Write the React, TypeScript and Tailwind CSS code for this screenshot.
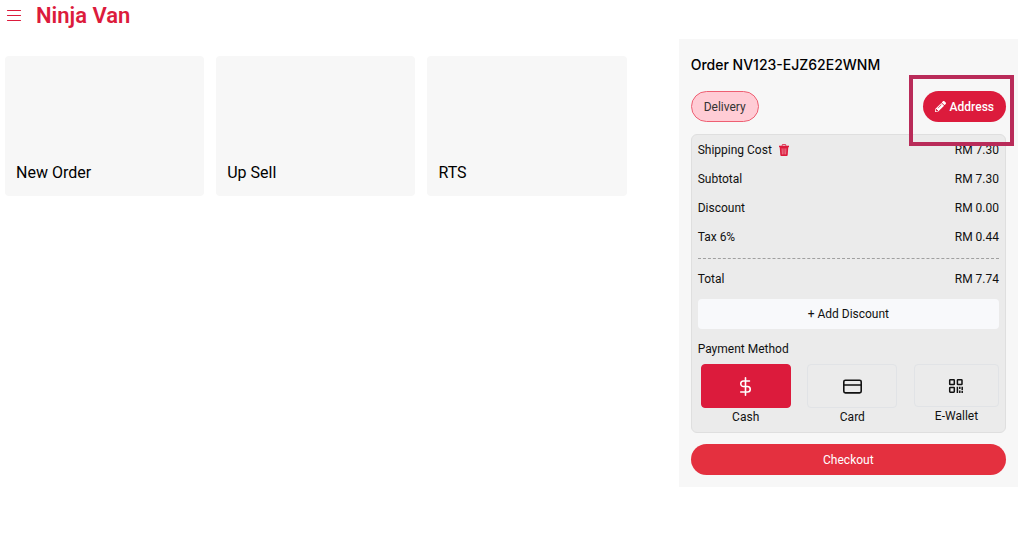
import { FaPencilAlt } from "react-icons/fa";
import { FiCreditCard, FiDollarSign } from "react-icons/fi";

const orderTypes = ["New Order", "Up Sell", "RTS"];

const charges = [
  { label: "Shipping Cost", amount: "RM 7.30", removable: true },
  { label: "Subtotal", amount: "RM 7.30" },
  { label: "Discount", amount: "RM 0.00" },
  { label: "Tax 6%", amount: "RM 0.44" },
];

const MenuIcon = () => (
  <svg className="size-4" viewBox="0 0 16 16" stroke="currentColor" strokeWidth="1.2" strokeLinecap="round" aria-hidden="true">
    <path d="M1.5 2.5h13M1.5 7.5h13M1.5 12.5h13" />
  </svg>
);

const TrashIcon = () => (
  <svg className="size-3" viewBox="0 0 12 12" fill="none" aria-hidden="true">
    <path d="M4.2 1.8V1a.6.6 0 0 1 .6-.6h2.4a.6.6 0 0 1 .6.6v.8" stroke="currentColor" strokeWidth="0.9" />
    <path d="M1 1.7h10v1.5H1z" fill="currentColor" />
    <path d="M1.7 3h8.6l-.6 8a1 1 0 0 1-1 .9H3.3a1 1 0 0 1-1-.9z" fill="currentColor" />
    <path d="M4.1 4.4l.3 6M6 4.4v6M7.9 4.4l-.3 6" stroke="#f0a3b0" strokeWidth="0.7" />
  </svg>
);

const QrIcon = () => (
  <svg
    className="size-4"
    viewBox="0 0 16 16"
    fill="none"
    stroke="currentColor"
    strokeWidth="1.5"
    aria-hidden="true"
  >
    <rect x="1.7" y="1.7" width="4.6" height="4.8" rx="0.6" />
    <rect x="9.4" y="1.7" width="4.6" height="4.8" rx="0.6" />
    <rect x="1.7" y="9.4" width="4.6" height="4.8" rx="0.6" />
    <path d="M9.4 8.8v6.2M11.8 8.8v2.2M11.8 12.4v2.6M14.2 8.8v3.4M14.2 13v2" />
  </svg>
);

const payments = [
  { id: "cash", label: "Cash", icon: <FiDollarSign size={19} />, width: "w-[90px]", height: "h-11" },
  { id: "card", label: "Card", icon: <FiCreditCard size={19} />, width: "w-[90px]", height: "h-11" },
  { id: "wallet", label: "E-Wallet", icon: <QrIcon />, width: "w-[85px]", height: "h-[43px]" },
];

const Header = () => {
  return (
    <header className="flex h-8 items-center gap-3.5 px-1.5">
      <button aria-label="Menu" className="text-[#dc1b3c]">
        <MenuIcon />
      </button>
      <h1 className="text-[22px] leading-8 font-semibold text-[#dc1b3c]">Ninja Van</h1>
    </header>
  );
};

const OrderPanel = () => {
  return (
    <aside className="w-1/3 bg-[#f7f7f7] p-3">
      <h2 className="pt-0.5 font-['Inter',sans-serif] text-sm leading-6 font-medium text-black">
        Order NV123-EJZ62E2WNM
      </h2>

      {/* Delivery and address buttons */}
      <div className="mt-3.5 flex items-center justify-between">
        <button className="h-[31px] rounded-full border border-[#ee5f72] bg-[#ffccd5] px-3 text-[#333]">
          Delivery
        </button>
        <div className="relative">
          <button className="flex h-[31px] items-center gap-1 rounded-full bg-[#dc1b3c] px-3 font-medium text-white">
            <FaPencilAlt size={11} />
            Address
          </button>
          <div className="pointer-events-none absolute -top-4 -right-2 -bottom-6 -left-3.5 border-4 border-[#b92b59]"></div>
        </div>
      </div>

      {/* Order summary */}
      <div className="mt-3 rounded-md border border-[#dfdfdf] bg-[#ebebeb] px-1.5 pb-1.5">
        <table className="w-full">
          <tbody>
            {charges.map((row) => (
              <tr key={row.label} className="h-[29px]">
                <th scope="row" className="text-left font-normal">
                  <span className="flex items-center gap-1.5">
                    {row.label}
                    {row.removable && (
                      <button aria-label="Remove shipping cost" className="text-[#dc1b3c]">
                        <TrashIcon />
                      </button>
                    )}
                  </span>
                </th>
                <td className="text-right">{row.amount}</td>
              </tr>
            ))}
          </tbody>
        </table>
        <div className="mt-[7px] flex items-center justify-between border-t border-dashed border-[#a0a0a0] py-3">
          <span>Total</span>
          <span>RM 7.74</span>
        </div>
        <button className="h-[30px] w-full rounded-sm bg-[#f8f9fb]">+ Add Discount</button>

        {/* Payment options */}
        <fieldset>
          <legend className="pt-3 pb-[7px]">Payment Method</legend>
          <div className="flex items-start justify-between pl-[3px]">
            {payments.map((item) => (
              <label key={item.id} className={`flex flex-col items-center ${item.width}`}>
                <input
                  type="radio"
                  name="payment"
                  defaultChecked={item.id === "cash"}
                  className="peer sr-only"
                />
                <span
                  className={`flex w-full items-center justify-center rounded-sm border border-[#e1e3e6] peer-checked:border-[#dc1b3c] peer-checked:bg-[#dc1b3c] peer-checked:text-white ${item.height}`}
                >
                  {item.icon}
                </span>
                <span className="leading-[18px]">{item.label}</span>
              </label>
            ))}
          </div>
        </fieldset>
      </div>

      <button className="mt-[11px] h-[31px] w-full rounded-full bg-[#e4303f] text-white">Checkout</button>
    </aside>
  );
};

const App = () => {
  return (
    <div className="min-h-screen bg-white font-['Roboto',sans-serif] text-xs text-[#111]">
      <Header />
      <div className="flex items-start pt-[7px] pr-1.5">
        <main className="grid flex-1 grid-cols-3 gap-3 pt-[17px] pr-[52px] pl-[5px]">
          {orderTypes.map((type) => (
            <button
              key={type}
              className="flex h-[140px] items-end rounded-sm bg-[#f7f7f7] px-[11px] pb-[11px] text-left text-base text-black"
            >
              {type}
            </button>
          ))}
        </main>
        <OrderPanel />
      </div>
    </div>
  );
};

export default App;
